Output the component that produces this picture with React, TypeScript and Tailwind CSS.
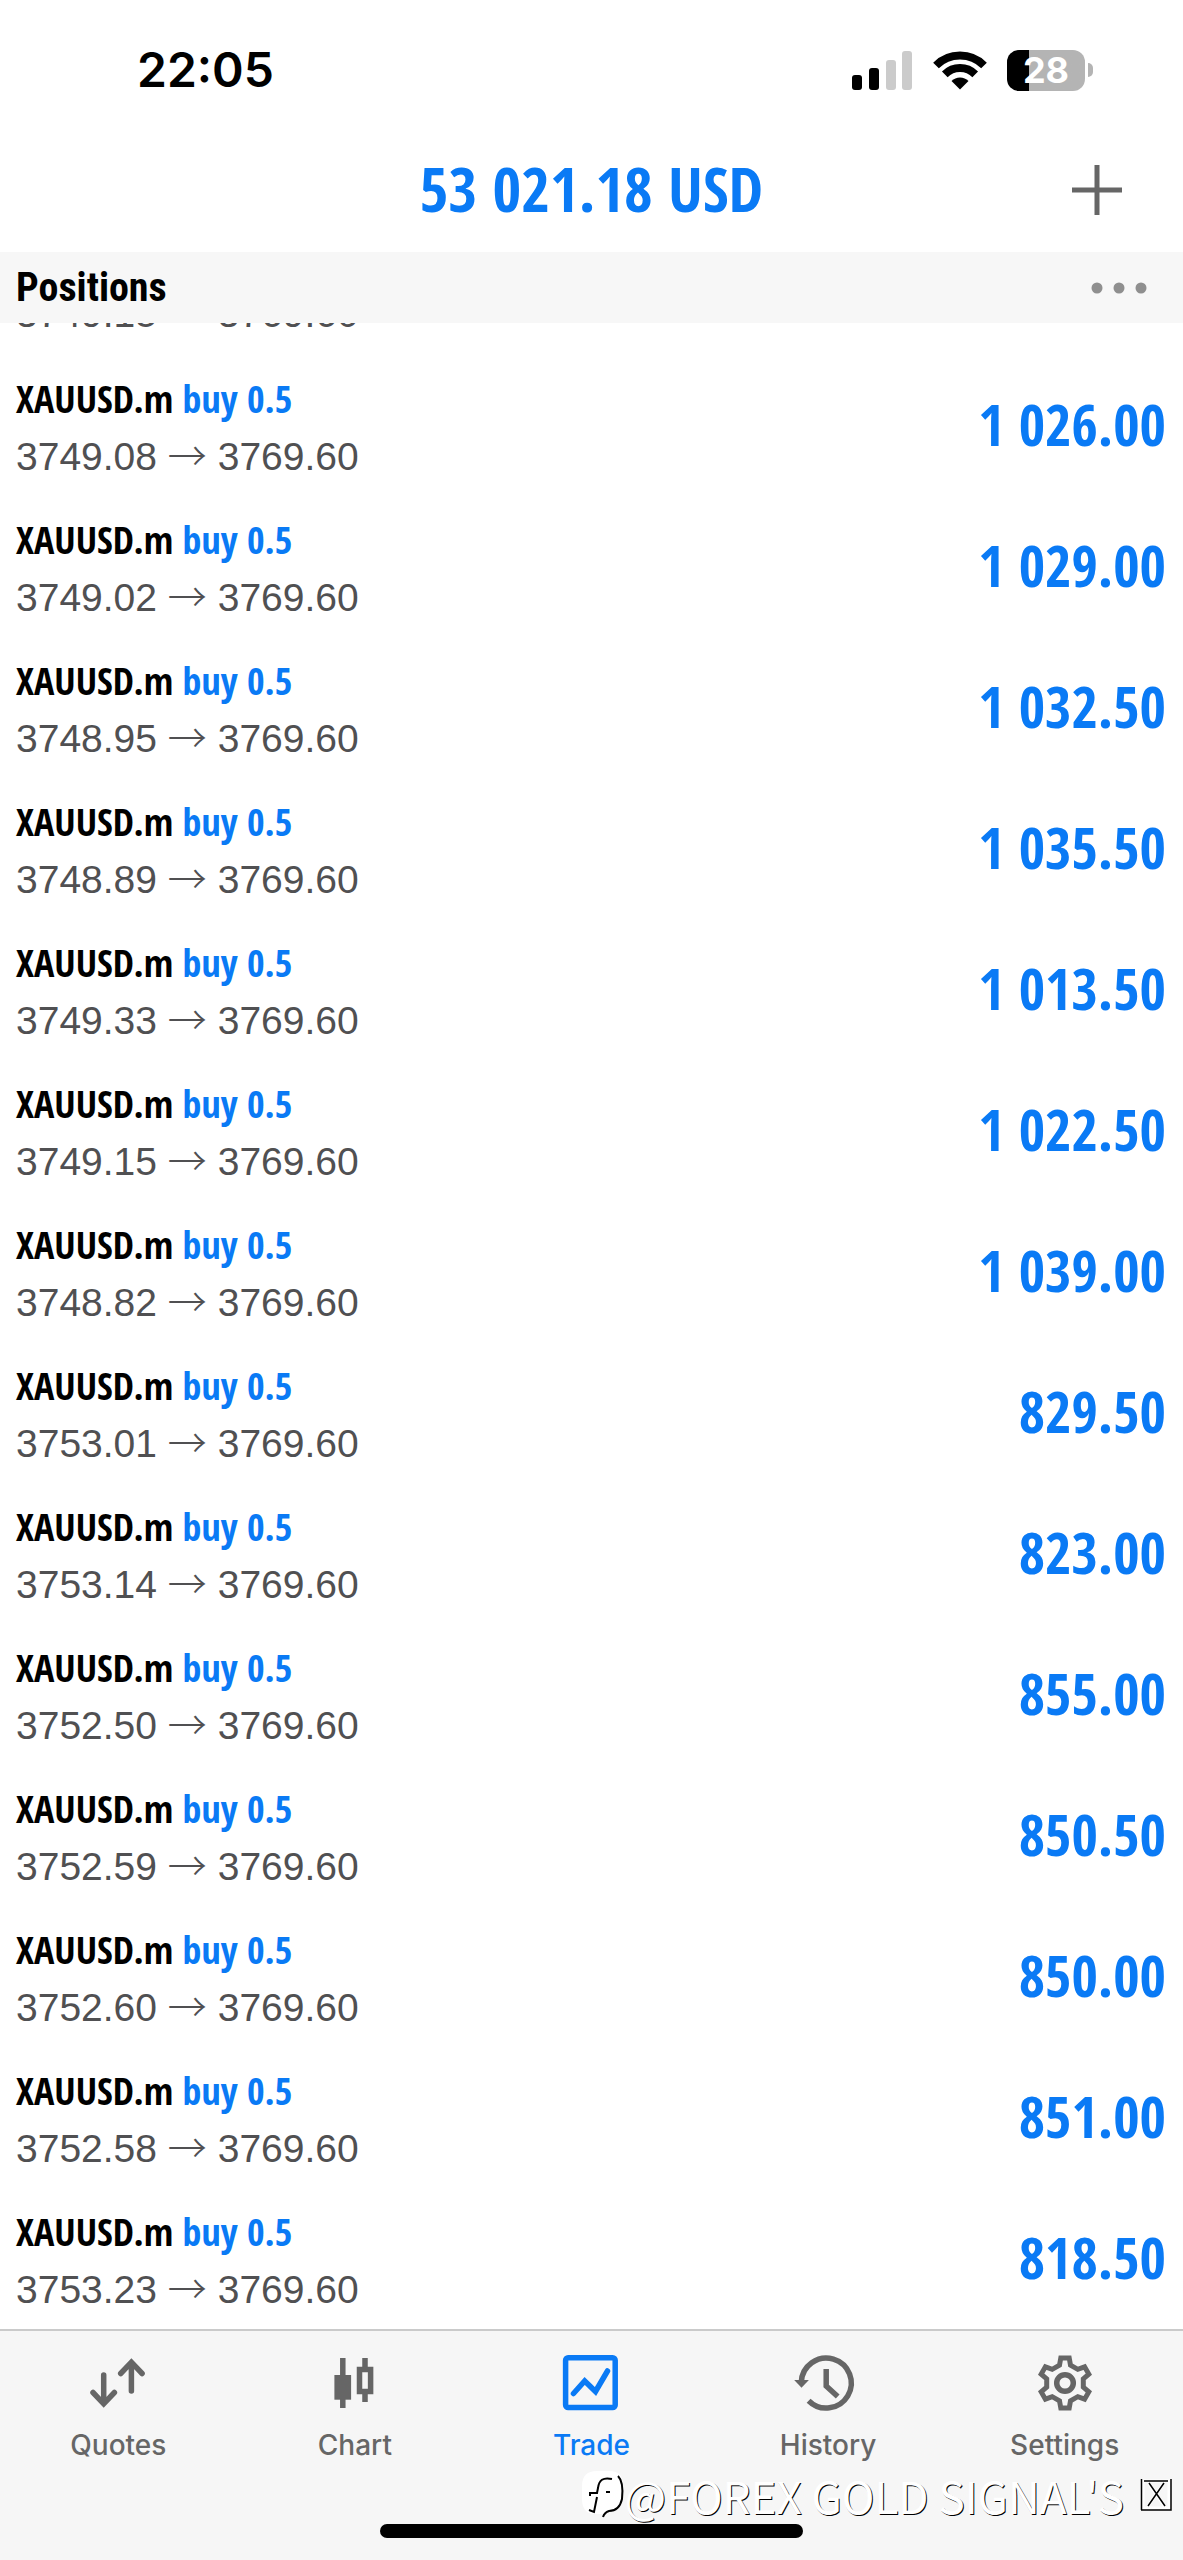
import React, { useState } from "react";

type Position = {
    id: number;
    symbol: string;
    side: "buy" | "sell";
    volume: string;
    open: string;
    current: string;
    profit: string;
};

type TabName = "Quotes" | "Chart" | "Trade" | "History" | "Settings";

const positions: Position[] = [
    { id: 2, symbol: "XAUUSD.m", side: "buy", volume: "0.5", open: "3749.08", current: "3769.60", profit: "1 026.00" },
    { id: 3, symbol: "XAUUSD.m", side: "buy", volume: "0.5", open: "3749.02", current: "3769.60", profit: "1 029.00" },
    { id: 4, symbol: "XAUUSD.m", side: "buy", volume: "0.5", open: "3748.95", current: "3769.60", profit: "1 032.50" },
    { id: 5, symbol: "XAUUSD.m", side: "buy", volume: "0.5", open: "3748.89", current: "3769.60", profit: "1 035.50" },
    { id: 6, symbol: "XAUUSD.m", side: "buy", volume: "0.5", open: "3749.33", current: "3769.60", profit: "1 013.50" },
    { id: 7, symbol: "XAUUSD.m", side: "buy", volume: "0.5", open: "3749.15", current: "3769.60", profit: "1 022.50" },
    { id: 8, symbol: "XAUUSD.m", side: "buy", volume: "0.5", open: "3748.82", current: "3769.60", profit: "1 039.00" },
    { id: 9, symbol: "XAUUSD.m", side: "buy", volume: "0.5", open: "3753.01", current: "3769.60", profit: "829.50" },
    { id: 10, symbol: "XAUUSD.m", side: "buy", volume: "0.5", open: "3753.14", current: "3769.60", profit: "823.00" },
    { id: 11, symbol: "XAUUSD.m", side: "buy", volume: "0.5", open: "3752.50", current: "3769.60", profit: "855.00" },
    { id: 12, symbol: "XAUUSD.m", side: "buy", volume: "0.5", open: "3752.59", current: "3769.60", profit: "850.50" },
    { id: 13, symbol: "XAUUSD.m", side: "buy", volume: "0.5", open: "3752.60", current: "3769.60", profit: "850.00" },
    { id: 14, symbol: "XAUUSD.m", side: "buy", volume: "0.5", open: "3752.58", current: "3769.60", profit: "851.00" },
    { id: 15, symbol: "XAUUSD.m", side: "buy", volume: "0.5", open: "3753.23", current: "3769.60", profit: "818.50" },
];

const StatusBar = () => (
    <div className="flex h-[140px] shrink-0 items-center justify-between pl-[137px] pr-[90px] font-['Inter',sans-serif]">
        <span className="text-[48px] font-semibold leading-none text-black">22:05</span>
        <div className="flex items-center gap-[20px]">
            {/* Signal */}
            <svg width="61" height="39" viewBox="0 0 61 39">
                <rect x="0" y="24" width="10" height="15" rx="3" fill="#000" />
                <rect x="17" y="17" width="10" height="22" rx="3" fill="#000" />
                <rect x="34" y="9" width="10" height="30" rx="3" fill="#cbcbcb" />
                <rect x="50" y="0" width="10" height="39" rx="3" fill="#cbcbcb" />
            </svg>
            {/* Wifi */}
            <svg width="54" height="39" viewBox="0 0 54 39" fill="none" stroke="#000" strokeWidth="8">
                <path d="M3 14.5a34 34 0 0 1 48 0" />
                <path d="M11.8 23.3a21.5 21.5 0 0 1 30.4 0" />
                <path d="M18.5 30a12 12 0 0 1 17 0L27 38.5Z" fill="#000" stroke="none" />
            </svg>
            {/* Battery */}
            <div className="flex items-center gap-[3px]">
                <div className="flex h-[41px] w-[78px] items-center justify-center rounded-[12px] bg-linear-to-r from-black from-28% to-[#b4b4b4] to-28%">
                    <span className="text-[36px] font-bold leading-none text-white">28</span>
                </div>
                <div className="h-[14px] w-[5px] rounded-r-full bg-[#b4b4b4]" />
            </div>
        </div>
    </div>
);

const PriceLine = ({ open, current }: { open: string; current: string }) => (
    <p className="font-['Liberation_Sans',sans-serif] text-[39px] leading-[54px] text-[#505052]">
        {open} <span className="font-['Noto_Sans_CJK_JP',sans-serif] font-light">→</span> {current}
    </p>
);

const PositionRow = ({ position }: { position: Position }) => (
    <li className="flex h-[141px] shrink-0 items-center justify-between pl-4 pr-[17px]">
        <div className="pt-[3px]">
            <p className="font-['Open_Sans_Condensed','Roboto_Condensed',sans-serif] text-[38px] font-bold leading-[56px] text-black">
                {position.symbol}{" "}
                <span className="text-[#0a7af5]">
                    {position.side} {position.volume}
                </span>
            </p>
            <PriceLine open={position.open} current={position.current} />
        </div>
        <span className="pb-1 font-['Open_Sans_Condensed','Roboto_Condensed',sans-serif] text-[57px] font-bold leading-[72px] text-[#0a7af5]">
            {position.profit}
        </span>
    </li>
);

const TabIcon = ({ name }: { name: TabName }) => (
    <svg
        width="66"
        height="56"
        viewBox="0 0 66 56"
        fill="none"
        stroke="currentColor"
        strokeWidth="5.5"
        className="overflow-visible"
    >
        {name === "Quotes" && (
            <g strokeLinecap="round">
                <path d="M18.7 20v28M8 37.5l10.7 11.3 10.7-11.3" />
                <path d="M46.4 36V8M35.7 18.5 46.4 7.2l10.7 11.3" />
            </g>
        )}
        {name === "Chart" && (
            <>
                <path d="M20.8 3v50M43 3v10M43 38v9" />
                <path d="M12.4 20h16.7v24.7H12.4z" fill="currentColor" stroke="none" />
                <path d="M37.5 14.4h11.1v22H37.5z" />
            </>
        )}
        {name === "Trade" && (
            <>
                <rect x="7.6" y="2.8" width="49.6" height="49.8" rx="2.5" />
                <path d="M15.5 38.5 26.7 26l10.8 10.5 12-20.5" strokeLinecap="round" />
            </>
        )}
        {name === "History" && (
            <>
                <path d="M6.3 27A25 25 0 1 1 13.6 45.7" />
                <path d="M-.8 25h14.7l-7.4 7.7z" fill="currentColor" stroke="none" />
                <path d="M31.2 14v17l11.5 10.5" />
            </>
        )}
        {name === "Settings" && (
            <g transform="translate(33 28)">
                <path
                    strokeWidth="5"
                    d="M-5.5-17.9-4.2-25.1H4.2L5.5-17.9 12.8-13.7 19.6-16.2 23.8-8.9 18.3-4.2V4.2L23.8 8.9 19.6 16.2 12.8 13.7 5.5 17.9 4.2 25.1H-4.2L-5.5 17.9-12.8 13.7-19.6 16.2-23.8 8.9-18.3 4.2V-4.2L-23.8-8.9-19.6-16.2-12.8-13.7Z"
                />
                <circle r="8.3" />
            </g>
        )}
    </svg>
);

const tabs: TabName[] = ["Quotes", "Chart", "Trade", "History", "Settings"];

const Watermark = () => (
    <div className="pointer-events-none absolute bottom-[38px] right-[11px] flex items-center">
        <svg width="44" height="50" viewBox="0 0 44 50" fill="none">
            <path
                d="M16 1h12c10 0 14 5 14 15v12c0 9-6 13-14 14-3 0-5 2-6 5l-1-3H14C5 44 1 38 1 29V16C1 6 6 1 16 1Z"
                fill="#fff"
            />
            <path d="M37 6c5 5 5 14 4 23-2 9-7 12-13 12-3 1-5 3-6 6" stroke="#000" strokeWidth="2" />
            <path d="M31 9c-9-2-13 1-14 9l-1 5H9v3M16 27l-3 15-5-2M25 22h4" stroke="#000" strokeWidth="2" />
        </svg>
        <span className="whitespace-pre font-['Noto_Sans_CJK_SC',sans-serif] text-[44px] leading-[54px] text-white [text-shadow:1px_1px_0_#000]">
            @FOREX GOLD SIGNAL'S
        </span>
        <svg width="32" height="34" viewBox="0 0 32 34" fill="none" className="ml-[16px]">
            <path d="M3 3h26v27H3zM9 6l15 22M23 6 8 28" stroke="#fff" strokeWidth="3" />
            <path d="M1.5 1v31M4 3h24M31 1v31H1M9 5l16 23M24 5 8 28" stroke="#000" strokeWidth="1.5" />
        </svg>
    </div>
);

const App = () => {
    const [activeTab, setActiveTab] = useState<TabName>("Trade");

    return (
        <div className="flex h-screen flex-col overflow-hidden bg-white">
            <StatusBar />

            {/* Balance */}
            <header className="grid h-[112px] shrink-0 grid-cols-[1fr_auto_1fr] items-center pb-3">
                <h1 className="col-start-2 pb-1 font-['Open_Sans_Condensed','Roboto_Condensed',sans-serif] text-[62px] font-bold leading-none text-[#0a7af5]">
                    53 021.18 USD
                </h1>
                <button type="button" aria-label="New order" className="mr-[61px] justify-self-end text-[#666]">
                    <svg width="50" height="50" viewBox="0 0 50 50" stroke="currentColor" strokeWidth="5">
                        <path d="M25 0v50M0 25h50" />
                    </svg>
                </button>
            </header>

            <div className="flex h-[71px] shrink-0 items-center justify-between bg-[#f7f7f7] pl-4 pr-9">
                <h2 className="font-['Roboto_Condensed',sans-serif] text-[40px] font-bold leading-none text-black">
                    Positions
                </h2>
                <button type="button" aria-label="More" className="text-[#8f8f8f]">
                    <svg width="56" height="12" viewBox="0 0 56 12" fill="currentColor">
                        <circle cx="6" cy="6" r="5.5" />
                        <circle cx="28" cy="6" r="5.5" />
                        <circle cx="50" cy="6" r="5.5" />
                    </svg>
                </button>
            </div>

            {/* Positions list, scrolled to the last row */}
            <ul className="flex min-h-0 flex-1 flex-col justify-end overflow-hidden">
                <li className="shrink-0 pb-[14px] pl-4">
                    <PriceLine open="3749.15" current="3769.60" />
                </li>
                {positions.map((position) => (
                    <PositionRow key={position.id} position={position} />
                ))}
            </ul>

            {/* Tab bar */}
            <footer className="relative flex h-[231px] shrink-0 flex-col justify-between border-t-2 border-[#cacaca] bg-[#f6f6f6] pb-[22px] pt-6">
                <nav className="grid grid-cols-5">
                    {tabs.map((tab) => (
                        <button
                            key={tab}
                            type="button"
                            onClick={() => setActiveTab(tab)}
                            className={`flex flex-col items-center gap-4 ${activeTab === tab ? "text-[#0a7af5]" : "text-[#666]"}`}
                        >
                            <TabIcon name={tab} />
                            <span className="font-['Inter',sans-serif] text-[28px] font-medium leading-9">{tab}</span>
                        </button>
                    ))}
                </nav>
                <div className="mx-auto h-[14px] w-[423px] rounded-full bg-black" />
                <Watermark />
            </footer>
        </div>
    );
};

export default App;
